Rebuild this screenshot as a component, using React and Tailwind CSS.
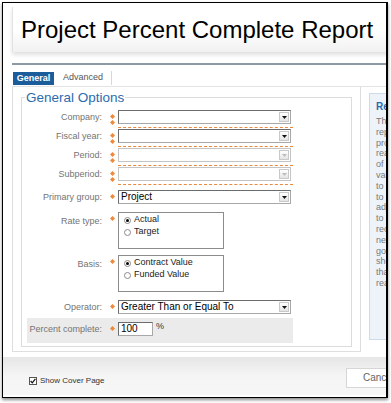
import React from "react";

// little orange "required" marks
const Dot = () => (
  <svg width="5" height="5" viewBox="0 0 5 5" className="block">
    <path d="M2.5 0L5 2.5L2.5 5L0 2.5Z" fill="#ee8a3c" />
  </svg>
);

const Marker = ({ double }) => (
  <div className="w-[16px] flex flex-col items-start gap-[1px] pl-[8px] pt-[4px]">
    <Dot />
    {double && <Dot />}
  </div>
);

const SelectBox = ({ value, disabled }) => (
  <div
    className={
      disabled
        ? "relative h-[14px] w-[173px] bg-white border border-[#c4c4c4] text-[10px] leading-[12px] pl-[2px]"
        : "relative h-[14px] w-[173px] bg-white border border-[#a8a8a8] border-t-[#6c6c6c] border-l-[#6c6c6c] text-[10px] leading-[12px] pl-[2px] text-black"
    }
  >
    {value}
    <div className="absolute right-[1px] top-[1px] bottom-[1px] w-[10px] border border-[#c9c9c9] bg-gradient-to-b from-white to-[#e4e4e4] flex items-center justify-center">
      <svg width="5" height="3" viewBox="0 0 5 3">
        <path d="M0 0H5L2.5 3Z" fill={disabled ? "#bdbdbd" : "#111"} />
      </svg>
    </div>
  </div>
);

const Label = ({ children }) => (
  <div className="w-[80px] text-right text-[9px] leading-[14px] text-[#747474]">
    {children}
  </div>
);

const DashedRow = ({ label, disabled }) => (
  <div className="flex h-[19px]">
    <Label>{label}</Label>
    <Marker double />
    <div className="w-[175px] h-[18px] border-b border-dashed border-[#e9893d]">
      <SelectBox disabled={disabled} />
    </div>
  </div>
);

const RadioBox = ({ options }) => (
  <div className="w-[106px] h-[37px] border border-[#8c8c8c] pl-[5px] pt-[1px] flex flex-col">
    {options.map((item, index) => (
      <div key={item} className="flex items-center gap-[3px] h-[12px] text-[9px] text-[#222]">
        <span className="w-[7px] h-[7px] rounded-full border border-[#8a8a8a] bg-white flex items-center justify-center">
          {index === 0 && <span className="w-[3px] h-[3px] rounded-full bg-black" />}
        </span>
        {item}
      </div>
    ))}
  </div>
);

const helpLines = [
  "This report shows the",
  "reporting period's",
  "project percent complete",
  "reached, as a percentage",
  "of contract or funded",
  "value. Use this report",
  "to monitor project status",
  "to identify projects that",
  "adjust revenue, and",
  "to determine the",
  "recognition of revenue",
  "needed to meet the",
  "goals. The report",
  "shows only projects",
  "that have a percentage",
  "reached or exceeded.",
];

const App = () => {
  return (
    <div className="w-[391px] h-[403px] bg-white font-['Liberation_Sans',Arial,sans-serif]">
      <div className="ml-[2px] mt-[2px] w-[386px] h-[396px] border border-black border-r-2 overflow-hidden shadow-[0_2px_3px_rgba(0,0,0,0.45)]">
        {/* title */}
        <div className="ml-[9px] mt-[4px] h-[45px] w-[400px] flex items-center pl-[8px] border-l border-[#e2e2e2] bg-gradient-to-b from-white via-white to-[#f1f1f1] shadow-[0_3px_4px_rgba(0,0,0,0.12)]">
          <span className="text-[24px] text-black whitespace-nowrap">Project Percent Complete Report</span>
        </div>
        <div className="ml-[9px] mt-[11px] h-[2px] bg-[#8d9aa4]" />

        {/* tabs */}
        <div className="ml-[10px] mt-[6px] h-[14px] flex items-center">
          <div className="w-[41px] h-[13px] bg-[#1b5c9b] text-white font-bold text-[9px] leading-[13px] text-center">
            General
          </div>
          <div className="ml-[9px] pr-[8px] h-[14px] border-r border-[#d8d8d8] text-[9px] leading-[13px] text-[#555]">
            Advanced
          </div>
        </div>
        <div className="ml-[9px] mt-[1px] h-px bg-[#e3e3e3]" />

        {/* main */}
        <div className="flex">
          <div className="ml-[9px] w-[349px] h-[265px] shrink-0 border-l border-r border-b border-[#dedede] pt-[3px] px-[8px]">
            <fieldset className="border border-[#dcdcdc] h-[257px] pt-[5px]">
              <legend className="ml-[3px] px-[1px] text-[13.5px] leading-[15px] text-[#2b6cad]">General Options</legend>
              <DashedRow label="Company:" />
              <DashedRow label="Fiscal year:" />
              <DashedRow label="Period:" disabled />
              <DashedRow label="Subperiod:" disabled />

              <div className="flex mt-[4px]">
                <Label>Primary group:</Label>
                <Marker />
                <SelectBox value="Project" />
              </div>

              <div className="flex mt-[8px]">
                <div className="pt-[2px]"><Label>Rate type:</Label></div>
                <Marker />
                <RadioBox options={["Actual", "Target"]} />
              </div>

              <div className="flex mt-[6px]">
                <div className="pt-[2px]"><Label>Basis:</Label></div>
                <Marker />
                <RadioBox options={["Contract Value", "Funded Value"]} />
              </div>

              <div className="flex mt-[8px]">
                <Label>Operator:</Label>
                <Marker />
                <SelectBox value="Greater Than or Equal To" />
              </div>

              <div className="flex mt-[4px] ml-[5px] w-[266px] h-[25px] bg-[#ebebeb] pt-[4px]">
                <div className="w-[75px] text-right text-[9px] leading-[14px] text-[#747474]">Percent complete:</div>
                <Marker />
                <div className="w-[35px] h-[14px] bg-white border border-[#a8a8a8] border-t-[#6c6c6c] border-l-[#6c6c6c] text-[10px] leading-[12px] pl-[2px]">
                  100
                </div>
                <span className="ml-[3px] text-[9px] leading-[9px] text-[#333]">%</span>
              </div>
            </fieldset>
          </div>

          {/* help panel */}
          <div className="ml-[8px] mt-[6px] w-[130px] h-[247px] shrink-0 bg-[#eef3f9] border border-[#cfdbe8] pl-[6px] pt-[7px]">
            <div className="text-[10px] font-bold text-[#2b6cad] leading-[12px]">Report Description</div>
            <div className="mt-[3px] text-[9px] leading-[10.8px] text-[#7a7a7a] whitespace-nowrap">
              {helpLines.map((line, index) => (
                <div key={index}>{line}</div>
              ))}
            </div>
          </div>
        </div>

        {/* footer */}
        <div className="mt-[5px] h-[38px] flex items-start bg-gradient-to-b from-[#e6e6e6] via-[#f5f5f5] to-[#f7f7f7]">
          <div className="ml-[26px] mt-[18px] flex items-center gap-[3px]">
            <span className="w-[8px] h-[8px] border border-[#555] bg-white flex items-center justify-center">
              <svg width="6" height="6" viewBox="0 0 6 6">
                <path d="M0.6 3L2.3 4.8L5.4 0.8" stroke="#111" strokeWidth="1.2" fill="none" />
              </svg>
            </span>
            <span className="text-[8px] text-[#333]">Show Cover Page</span>
          </div>
          <div className="ml-auto mr-[-30px] mt-[11px] w-[70px] h-[20px] shrink-0 bg-white border border-[#d6d6d6] text-[10px] leading-[18px] text-[#666] pl-[16px]">
            Cancel
          </div>
        </div>
      </div>
    </div>
  );
};

export default App;
